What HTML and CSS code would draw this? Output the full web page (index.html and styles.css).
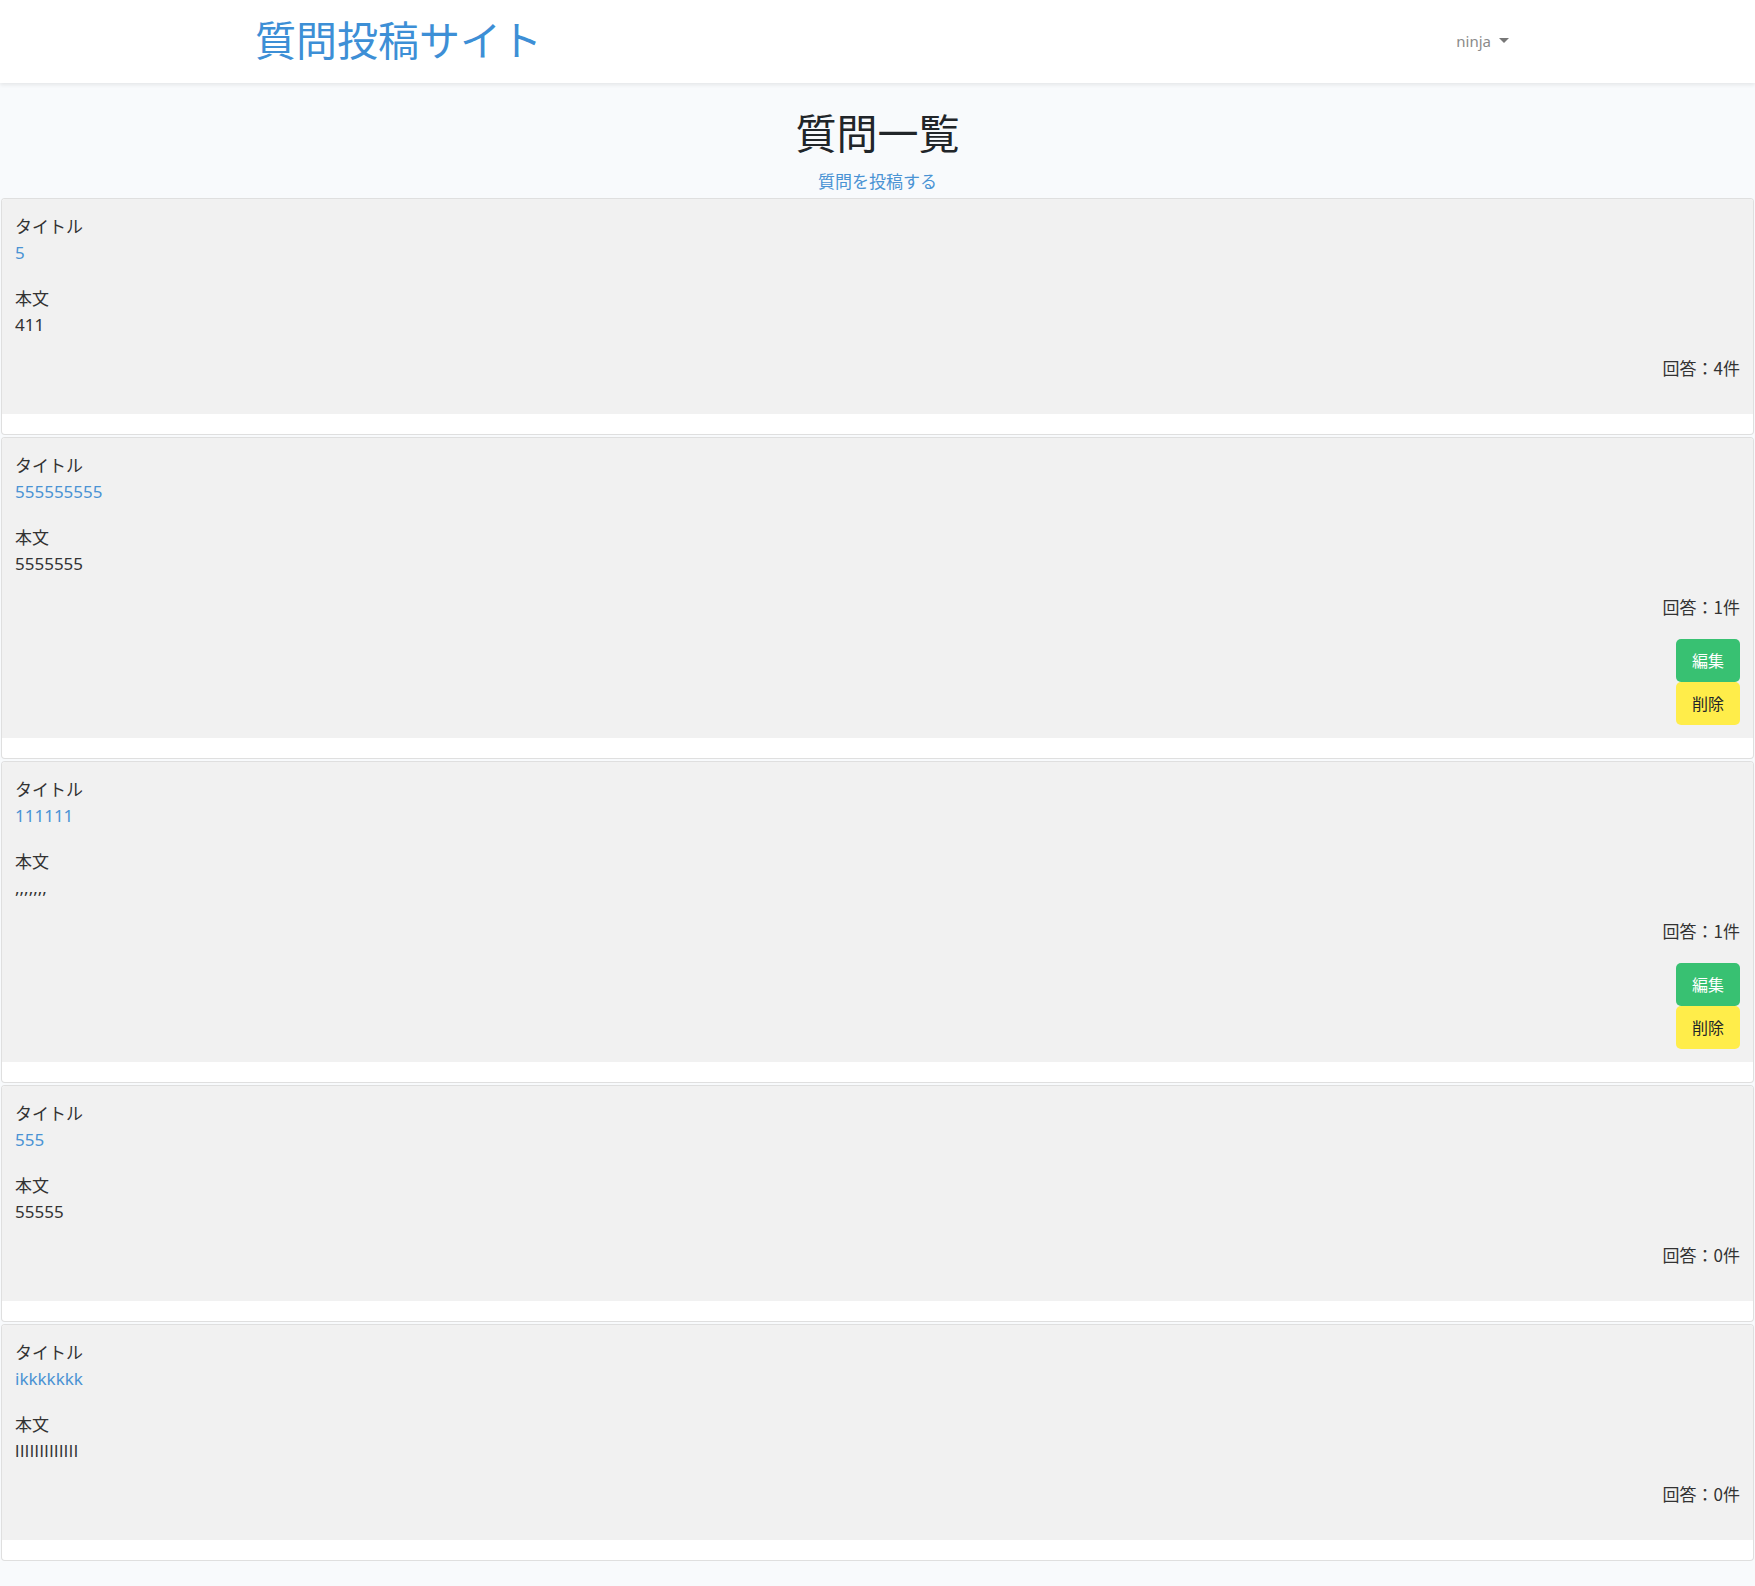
FILE: index.html
```html
<!DOCTYPE html>
<html lang="ja">
<head>
<meta charset="utf-8">
<title>質問投稿サイト</title>
<link rel="stylesheet" href="styles.css">
</head>
<body>
<header class="navbar">
  <a class="brand" href="#">質問投稿サイト</a>
  <a class="user-menu" href="#">ninja<span class="caret"></span></a>
</header>
<main>
  <h1 class="page-title">質問一覧</h1>
  <div class="post-link-wrap"><a class="post-link" href="#">質問を投稿する</a></div>

  <div class="card">
    <div class="card-body">
      <div class="field"><div class="label">タイトル</div><a class="value link" href="#">5</a></div>
      <div class="field"><div class="label">本文</div><div class="value">411</div></div>
      <div class="answers">回答：4件</div>
    </div>
  </div>

  <div class="card">
    <div class="card-body">
      <div class="field"><div class="label">タイトル</div><a class="value link" href="#">555555555</a></div>
      <div class="field"><div class="label">本文</div><div class="value">5555555</div></div>
      <div class="answers">回答：1件</div>
      <div class="actions">
        <a class="btn btn-edit" href="#">編集</a>
        <button class="btn btn-delete" type="button">削除</button>
      </div>
    </div>
  </div>

  <div class="card">
    <div class="card-body">
      <div class="field"><div class="label">タイトル</div><a class="value link" href="#">111111</a></div>
      <div class="field"><div class="label">本文</div><div class="value">,,,,,,,</div></div>
      <div class="answers">回答：1件</div>
      <div class="actions">
        <a class="btn btn-edit" href="#">編集</a>
        <button class="btn btn-delete" type="button">削除</button>
      </div>
    </div>
  </div>

  <div class="card">
    <div class="card-body">
      <div class="field"><div class="label">タイトル</div><a class="value link" href="#">555</a></div>
      <div class="field"><div class="label">本文</div><div class="value">55555</div></div>
      <div class="answers">回答：0件</div>
    </div>
  </div>

  <div class="card">
    <div class="card-body">
      <div class="field"><div class="label">タイトル</div><a class="value link" href="#">ikkkkkkk</a></div>
      <div class="field"><div class="label">本文</div><div class="value spaced">lllllllllllll</div></div>
      <div class="answers">回答：0件</div>
    </div>
  </div>
</main>
</body>
</html>
```

FILE: styles.css
```css
* { box-sizing: border-box; }

html, body {
  margin: 0;
  padding: 0;
}

body {
  background: #f8fafc;
  color: #212529;
  font-family: "Noto Sans", "Noto Sans CJK JP", sans-serif;
  font-size: 17px;
  line-height: 27px;
}

a { text-decoration: none; }

.navbar {
  height: 83px;
  background: #fff;
  box-shadow: 0 2px 4px rgba(0, 0, 0, 0.08);
  display: flex;
  align-items: center;
  justify-content: space-between;
  padding: 0 246px 0 255px;
  position: relative;
  z-index: 1;
}

.brand {
  font-family: "Noto Sans CJK JP", sans-serif;
  font-size: 41px;
  line-height: 48px;
  color: #3d8fd6;
  margin-top: -8px;
}

.user-menu {
  font-size: 15px;
  color: #8a8a8a;
  display: flex;
  align-items: center;
}

.caret {
  display: inline-block;
  width: 0;
  height: 0;
  margin-left: 8px;
  border-top: 5px solid #777;
  border-left: 5px solid transparent;
  border-right: 5px solid transparent;
  margin-top: -2px;
}

main {
  padding-top: 24px;
}

.page-title {
  margin: 0;
  text-align: center;
  font-family: "Noto Sans CJK JP", sans-serif;
  font-weight: 400;
  font-size: 41px;
  line-height: 49px;
  color: #212529;
}

.post-link-wrap {
  text-align: center;
  margin-top: 11px;
  margin-bottom: 3px;
}

.post-link {
  color: #4a93d4;
  font-size: 17px;
  font-family: "Noto Sans CJK JP", sans-serif;
}

.card {
  margin: 0 1px 2px 1px;
  background: #fff;
  border: 1px solid rgba(0, 0, 0, 0.125);
  border-radius: 4px;
  padding-bottom: 20px;
  overflow: hidden;
}

.card-body {
  background: #f1f1f1;
  padding: 13px 13px 13px 13px;
}

.field {
  margin-bottom: 18px;
}

.field + .field {
  margin-bottom: 16px;
}

.label,
.answers {
  font-family: "Noto Sans CJK JP", sans-serif;
  font-size: 17px;
  color: #333;
}

.value {
  display: block;
  font-size: 17px;
  color: #333;
}

.value.link {
  color: #4a93d4;
}

.spaced {
  letter-spacing: 0.5px;
}

.answers {
  text-align: right;
  margin-bottom: 20px;
}

.actions {
  display: flex;
  flex-direction: column;
  align-items: flex-end;
  margin-top: -1px;
}

.btn {
  display: block;
  width: 64px;
  height: 43px;
  line-height: 43px;
  text-align: center;
  border: none;
  border-radius: 5px;
  font-family: "Noto Sans CJK JP", sans-serif;
  font-size: 16px;
  padding: 0;
  cursor: pointer;
}

.btn-edit {
  background: #38c172;
  color: #fff;
}

.btn-delete {
  background: #ffed4a;
  color: #212529;
}
```
